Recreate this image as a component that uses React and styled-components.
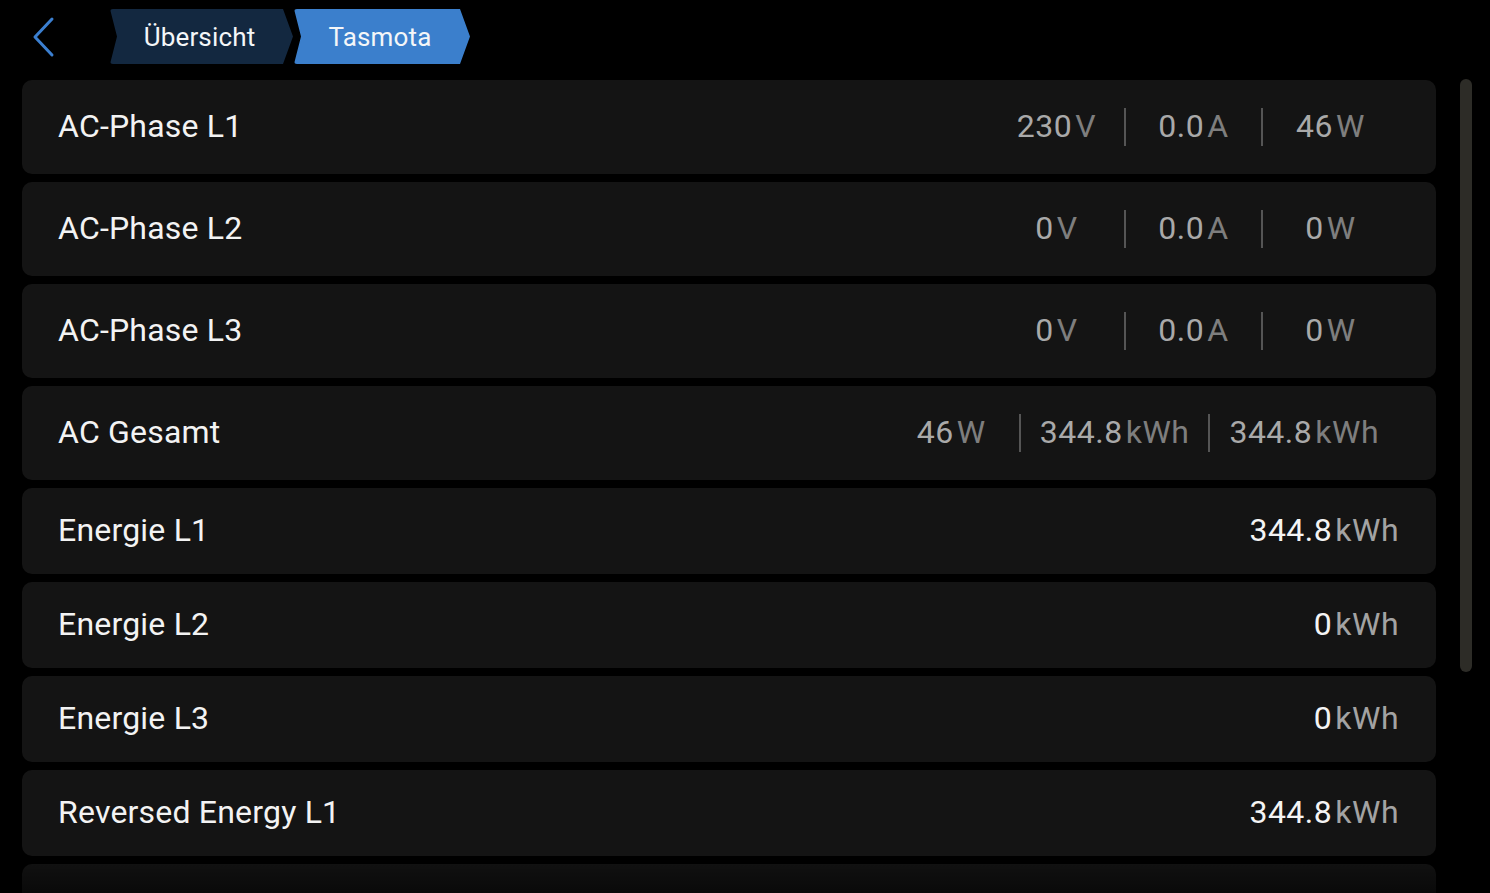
import React from "react";
import styled, { createGlobalStyle } from "styled-components";

const Global = createGlobalStyle`
  html, body { margin: 0; padding: 0; background: #000; }
  body { font-family: Roboto, "Noto Sans", sans-serif; color: #f2f2f2; overflow: hidden; }
  * { box-sizing: border-box; }
`;

const Page = styled.div`
  width: 1490px;
  height: 893px;
  display: flex;
  flex-direction: column;
  background: #000;
  position: relative;
  overflow: hidden;
`;

const Header = styled.div`
  height: 80px;
  flex: none;
  display: flex;
  align-items: flex-start;
  padding: 9px 0 0 30px;
`;

const BackButton = styled.button`
  width: 30px;
  height: 55px;
  padding: 0;
  margin: 0 50px 0 0;
  border: none;
  background: transparent;
  display: flex;
  align-items: center;
  justify-content: center;
`;

const Crumbs = styled.div`
  display: flex;
  gap: 1px;
`;

const Crumb = styled.div`
  height: 55px;
  width: ${(p) => p.$w}px;
  display: flex;
  align-items: center;
  justify-content: center;
  padding-right: 4px;
  background: ${(p) => (p.$active ? "#3b7fcc" : "#132840")};
  color: #f4f6f8;
  font-size: 26px;
  letter-spacing: 0.15px;
  clip-path: polygon(0 0, calc(100% - 10px) 0, 100% 50%, calc(100% - 10px) 100%, 0 100%, 7px 50%);
  border-radius: 3px;
`;

const Body = styled.div`
  flex: 1;
  display: flex;
  min-height: 0;
  position: relative;
`;

const List = styled.div`
  width: 1414px;
  margin-left: 22px;
  display: flex;
  flex-direction: column;
  gap: 8px;
`;

const Row = styled.div`
  height: ${(p) => p.$h}px;
  flex: none;
  background: #141414;
  border-radius: 10px;
  display: flex;
  align-items: center;
  justify-content: space-between;
  padding: 0 37px 3px 36px;
`;

const Label = styled.div`
  font-size: 32px;
  color: #f3f3f3;
  letter-spacing: 0.2px;
`;

const Cells = styled.div`
  display: flex;
  align-items: center;
`;

const Cell = styled.div`
  min-width: 137px;
  padding: 0 20px;
  display: flex;
  justify-content: center;
  align-items: baseline;
  position: relative;
  font-size: 32px;
  ${(p) =>
    p.$sep &&
    `
    &::before {
      content: "";
      position: absolute;
      left: -1px;
      top: 50%;
      width: 2px;
      height: 38px;
      margin-top: -18px;
      background: #555;
    }
  `}
`;

const Num = styled.span`
  color: ${(p) => (p.$bright ? "#f4f4f4" : "#a9a9a9")};
  letter-spacing: 0.5px;
`;

const Unit = styled.span`
  color: ${(p) => (p.$bright ? "#a3a3a3" : "#7e7e7e")};
  margin-left: 3px;
  letter-spacing: 0.5px;
`;

const Single = styled.div`
  font-size: 32px;
  display: flex;
  align-items: baseline;
`;

const Scrollbar = styled.div`
  position: absolute;
  left: 1460px;
  top: -1px;
  width: 12px;
  height: 593px;
  border-radius: 6px;
  background: #2d2c27;
`;

const Fade = styled.div`
  position: absolute;
  left: 0;
  right: 0;
  bottom: 0;
  height: 30px;
  background: linear-gradient(to bottom, rgba(0,0,0,0.15), rgba(0,0,0,0.55));
  pointer-events: none;
`;

const tri = [
  { label: "AC-Phase L1", vals: [["230", "V"], ["0.0", "A"], ["46", "W"]] },
  { label: "AC-Phase L2", vals: [["0", "V"], ["0.0", "A"], ["0", "W"]] },
  { label: "AC-Phase L3", vals: [["0", "V"], ["0.0", "A"], ["0", "W"]] },
  { label: "AC Gesamt", vals: [["46", "W"], ["344.8", "kWh"], ["344.8", "kWh"]] },
];

const singles = [
  { label: "Energie L1", v: "344.8" },
  { label: "Energie L2", v: "0" },
  { label: "Energie L3", v: "0" },
  { label: "Reversed Energy L1", v: "344.8" },
];

export default function App() {
  return (
    <>
      <Global />
      <Page>
        <Header>
          <BackButton aria-label="Zurück">
            <svg width="30" height="42" viewBox="0 0 30 42">
              <polyline points="22,3 5,21 22,39" fill="none" stroke="#3b7fd0" strokeWidth="3" strokeLinecap="round" strokeLinejoin="round" />
            </svg>
          </BackButton>
          <Crumbs>
            <Crumb $w={183}>Übersicht</Crumb>
            <Crumb $w={176} $active>Tasmota</Crumb>
          </Crumbs>
        </Header>
        <Body>
          <List>
            {tri.map((r) => (
              <Row key={r.label} $h={94}>
                <Label>{r.label}</Label>
                <Cells>
                  {r.vals.map(([n, u], i) => (
                    <Cell key={i} $sep={i > 0}>
                      <Num>{n}</Num>
                      <Unit>{u}</Unit>
                    </Cell>
                  ))}
                </Cells>
              </Row>
            ))}
            {singles.map((r) => (
              <Row key={r.label} $h={86}>
                <Label>{r.label}</Label>
                <Single>
                  <Num $bright>{r.v}</Num>
                  <Unit $bright>kWh</Unit>
                </Single>
              </Row>
            ))}
            <Row $h={86} aria-hidden="true" />
          </List>
          <Scrollbar />
        </Body>
        <Fade />
      </Page>
    </>
  );
}
